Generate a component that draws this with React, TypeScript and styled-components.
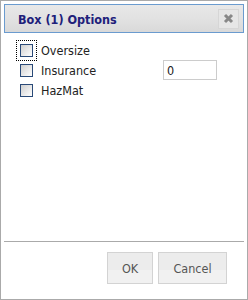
import React, {useState} from "react";
import styled, {createGlobalStyle} from "styled-components";

const GlobalStyle = createGlobalStyle`
  html, body {
    margin: 0;
    padding: 0;
    background: #ffffff;
  }
  * {
    box-sizing: border-box;
  }
`;

const FONT = `"DejaVu Sans Condensed", "Liberation Sans", sans-serif`;

const Dialog = styled.div`
  width: 248px;
  height: 300px;
  border: 1px solid #aaaaaa;
  padding: 3px;
  display: flex;
  flex-direction: column;
  background: #ffffff;
  font-family: ${FONT};
`;

const TitleBar = styled.div`
  height: 29px;
  border: 1px solid #6a9bcf;
  background: linear-gradient(to bottom, #e8e8e8 0%, #e2e2e2 50%, #d9d9d9 100%);
  display: flex;
  align-items: center;
  justify-content: space-between;
  padding: 0 4px 0 13px;
`;

const Title = styled.span`
  font-size: 12.5px;
  font-weight: bold;
  color: #20207a;
  padding-top: 1px;
`;

const CloseButton = styled.button`
  width: 21px;
  height: 20px;
  padding: 0;
  border: 1px solid #d6d6d6;
  background: #e6e6e6;
  display: flex;
  align-items: center;
  justify-content: center;
  cursor: pointer;
`;

const Content = styled.div`
  flex: 1;
  padding: 7px 0 0 16px;
  display: flex;
  flex-direction: column;
`;

const Row = styled.label`
  height: 20px;
  display: flex;
  align-items: center;
  font-size: 12.5px;
  color: #222222;
`;

const Check = styled.input<{ $focused?: boolean }>`
  appearance: none;
  -webkit-appearance: none;
  width: 13px;
  height: 13px;
  margin: 0 8px 0 0;
  border: 1px solid #2a4a78;
  background: linear-gradient(135deg, #cfcfcf 0%, #ececec 60%, #ffffff 100%);
  outline: ${(props) => (props.$focused ? "1px dotted #000000" : "none")};
  outline-offset: 3px;
  flex-shrink: 0;
  &:checked {
    background: #ffffff;
    box-shadow: inset 0 0 0 3px #ffffff, inset 0 0 0 10px #2a4a78;
  }
`;

const LabelText = styled.span<{ $width?: number }>`
  width: ${(props) => (props.$width ? `${props.$width}px` : "auto")};
`;

const TextField = styled.input`
  width: 54px;
  height: 20px;
  border: 1px solid #cccccc;
  padding: 0 3px;
  font-family: ${FONT};
  font-size: 12.5px;
  color: #222222;
  outline: none;
`;

const Separator = styled.div`
  border-top: 1px solid #aaaaaa;
`;

const ButtonBar = styled.div`
  height: 54px;
  display: flex;
  justify-content: flex-end;
  align-items: flex-start;
  gap: 5px;
  padding: 10px 17px 0 0;
`;

const DialogButton = styled.button<{ $width: number }>`
  width: ${(props) => props.$width}px;
  height: 32px;
  border: 1px solid #d3d3d3;
  background: linear-gradient(to bottom, #ececec 0%, #ececec 55%, #f1f1f1 56%, #f1f1f1 100%);
  font-family: ${FONT};
  font-size: 12.5px;
  color: #555555;
  padding: 0;
  cursor: pointer;
`;

const CloseIcon = () => (
    <svg width="11" height="11" viewBox="0 0 11 11">
        <path d="M2 2 L9 9 M9 2 L2 9" stroke="#888888" strokeWidth="3" strokeLinecap="butt" />
    </svg>
);

const App: React.FC = () => {
    const [oversize, setOversize] = useState(false);
    const [insurance, setInsurance] = useState(false);
    const [hazmat, setHazmat] = useState(false);
    const [amount, setAmount] = useState("0");

    return (
        <>
            <GlobalStyle />
            <Dialog>
                <TitleBar>
                    <Title>Box (1) Options</Title>
                    <CloseButton aria-label="close">
                        <CloseIcon />
                    </CloseButton>
                </TitleBar>
                <Content>
                    <Row>
                        <Check type="checkbox" $focused checked={oversize} onChange={() => setOversize(!oversize)} />
                        <LabelText>Oversize</LabelText>
                    </Row>
                    <Row>
                        <Check type="checkbox" checked={insurance} onChange={() => setInsurance(!insurance)} />
                        <LabelText $width={122}>Insurance</LabelText>
                        <TextField value={amount} onChange={(e) => setAmount(e.target.value)} />
                    </Row>
                    <Row>
                        <Check type="checkbox" checked={hazmat} onChange={() => setHazmat(!hazmat)} />
                        <LabelText>HazMat</LabelText>
                    </Row>
                </Content>
                <Separator />
                <ButtonBar>
                    <DialogButton $width={46}>OK</DialogButton>
                    <DialogButton $width={69}>Cancel</DialogButton>
                </ButtonBar>
            </Dialog>
        </>
    );
};

export default App;
